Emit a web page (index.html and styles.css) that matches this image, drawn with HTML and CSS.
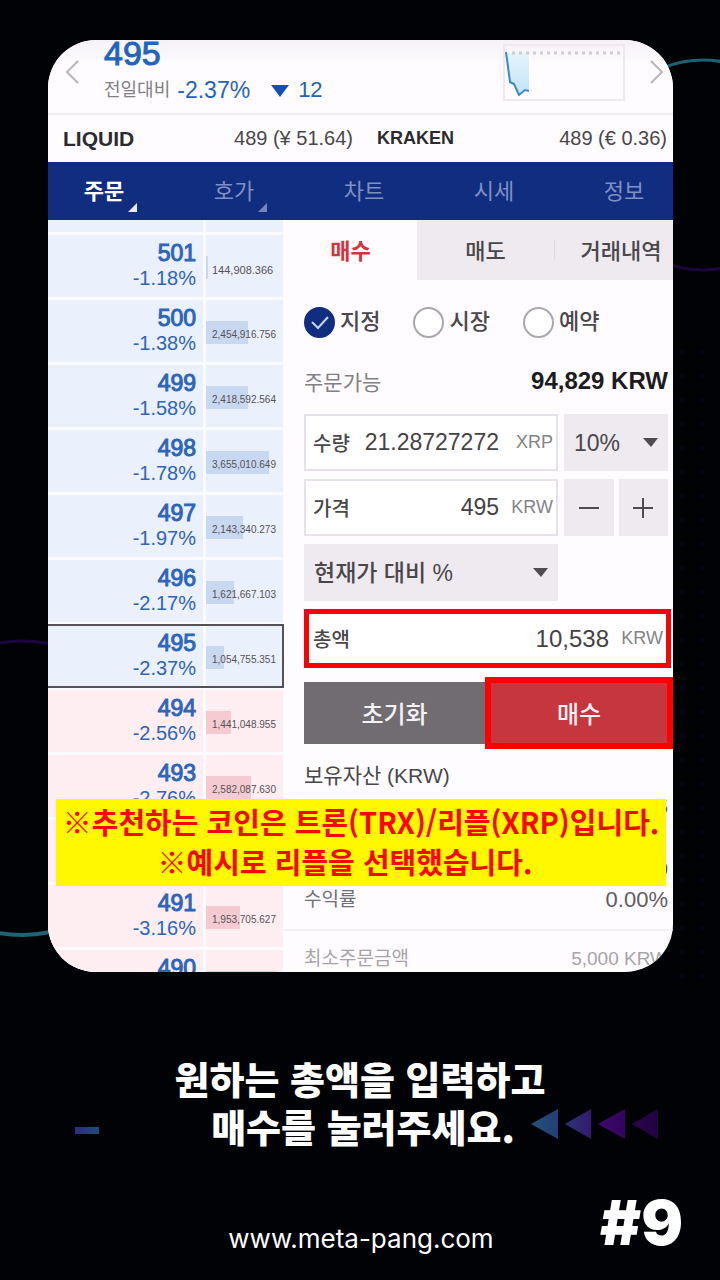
FILE: index.html
```html
<!DOCTYPE html>
<html lang="ko">
<head>
<meta charset="utf-8">
<meta name="viewport" content="width=device-width, initial-scale=1">
<title>#9 매수하기</title>
<link rel="stylesheet" href="styles.css">
</head>
<body>
<div class="page">
  <svg class="ring ring-right" viewBox="0 0 214 214" fill="none" stroke-width="3" aria-hidden="true">
    <path d="M2 107a105 105 0 0 1 210 0" stroke="#1c6473"/>
    <path d="M2 107a105 105 0 0 0 210 0" stroke="#1d0640"/>
  </svg>
  <svg class="ring ring-left" viewBox="0 0 298 298" fill="none" aria-hidden="true">
    <path d="M2 149a147 147 0 0 1 294 0" stroke="#1d0640" stroke-width="3"/>
    <path d="M2 149a147 147 0 0 0 294 0" stroke="#1c6473" stroke-width="4"/>
  </svg>
  <div class="dots"></div>

  <main class="card">
    <header class="ticker">
      <button class="arrow" aria-label="이전"><svg width="14" height="24" viewBox="0 0 14 24" fill="none" stroke="#b9b6ba" stroke-width="2"><path d="M13 1 2 12l11 11"/></svg></button>
      <div class="quote">
        <strong class="quote-price">495</strong>
        <p class="quote-change"><span class="quote-label">전일대비</span><span>-2.37%</span><svg width="18" height="12" viewBox="0 0 18 12" fill="#1450b4"><path d="M0 0h18L9 12z"/></svg><span class="quote-diff">12</span></p>
      </div>
      <svg class="spark" width="122" height="57" viewBox="0 0 122 57" fill="none">
        <defs><linearGradient id="fade" x1="0" y1="0" x2="0" y2="1"><stop offset="0" stop-color="#e4f4fb"/><stop offset="1" stop-color="#c0e4f7"/></linearGradient></defs>
        <rect x="1" y="1" width="120" height="55" stroke="#f0e8ee" stroke-width="2"/>
        <path d="M3 9h23v38l-5-1-5 5-5-10-4-3z" fill="url(#fade)"/>
        <path d="M9 9h109" stroke="#cfcbd0" stroke-width="3" stroke-dasharray="3 4"/>
        <path d="M3 8l4 30 4 2 5 11 6-5 4 1" stroke="#3f88bd" stroke-width="2"/>
      </svg>
      <button class="arrow" aria-label="다음"><svg width="14" height="24" viewBox="0 0 14 24" fill="none" stroke="#b9b6ba" stroke-width="2"><path d="m1 1 11 11L1 23"/></svg></button>
    </header>

    <div class="exchanges">
      <div class="exchange"><b>LIQUID</b><span>489 (¥ 51.64)</span></div>
      <div class="exchange"><b class="small">KRAKEN</b><span>489 (€ 0.36)</span></div>
    </div>

    <nav class="tabs">
      <a class="tab active" href="#">주문<svg class="corner" width="9" height="9" viewBox="0 0 9 9" fill="currentColor"><path d="M9 0v9H0z"/></svg></a>
      <a class="tab" href="#">호가<svg class="corner" width="9" height="9" viewBox="0 0 9 9" fill="currentColor"><path d="M9 0v9H0z"/></svg></a>
      <a class="tab" href="#">차트</a>
      <a class="tab" href="#">시세</a>
      <a class="tab" href="#">정보</a>
    </nav>

    <div class="trade">
      <div class="book">
        <div class="row"><div class="price"><b>502</b><span>-0.98%</span></div><div class="depth"></div></div>
        <div class="row"><div class="price"><b>501</b><span>-1.18%</span></div><div class="depth"><i class="bar" style="width:2%"></i><span class="qty wide">144,908.366</span></div></div>
        <div class="row"><div class="price"><b>500</b><span>-1.38%</span></div><div class="depth"><i class="bar" style="width:55%"></i><span class="qty">2,454,916.756</span></div></div>
        <div class="row"><div class="price"><b>499</b><span>-1.58%</span></div><div class="depth"><i class="bar" style="width:54%"></i><span class="qty">2,418,592.564</span></div></div>
        <div class="row"><div class="price"><b>498</b><span>-1.78%</span></div><div class="depth"><i class="bar" style="width:82%"></i><span class="qty">3,655,010.649</span></div></div>
        <div class="row"><div class="price"><b>497</b><span>-1.97%</span></div><div class="depth"><i class="bar" style="width:48%"></i><span class="qty">2,143,340.273</span></div></div>
        <div class="row"><div class="price"><b>496</b><span>-2.17%</span></div><div class="depth"><i class="bar" style="width:36%"></i><span class="qty">1,621,667.103</span></div></div>
        <div class="row current"><div class="price"><b>495</b><span>-2.37%</span></div><div class="depth"><i class="bar" style="width:23%"></i><span class="qty">1,054,755.351</span></div></div>
        <div class="row bid"><div class="price"><b>494</b><span>-2.56%</span></div><div class="depth"><i class="bar" style="width:32%"></i><span class="qty">1,441,048.955</span></div></div>
        <div class="row bid"><div class="price"><b>493</b><span>-2.76%</span></div><div class="depth"><i class="bar" style="width:58%"></i><span class="qty">2,582,087.630</span></div></div>
        <div class="row bid"><div class="price"></div><div class="depth"></div></div>
        <div class="row bid"><div class="price"><b>491</b><span>-3.16%</span></div><div class="depth"><i class="bar" style="width:44%"></i><span class="qty">1,953,705.627</span></div></div>
        <div class="row bid"><div class="price"><b>490</b></div><div class="depth"><i class="bar" style="width:92%"></i></div></div>
      </div>

      <section class="order">
        <div class="sides">
          <button class="side on">매수</button>
          <button class="side">매도</button>
          <button class="side">거래내역</button>
        </div>
        <form class="form">
          <div class="types">
            <label class="type"><input type="radio" name="type" checked>지정</label>
            <label class="type"><input type="radio" name="type">시장</label>
            <label class="type"><input type="radio" name="type">예약</label>
          </div>
          <p class="available"><span>주문가능</span><b>94,829 KRW</b></p>
          <div class="line">
            <label class="field"><span class="name">수량</span><input type="text" value="21.28727272"><span class="unit">XRP</span></label>
            <div class="pick pick-small"><select aria-label="비율"><option>10%</option></select><svg width="15" height="9" viewBox="0 0 15 9" fill="#4f4c50"><path d="M0 0h15L8 9z"/></svg></div>
          </div>
          <div class="line">
            <label class="field"><span class="name">가격</span><input type="text" value="495"><span class="unit">KRW</span></label>
            <div class="steps">
              <button type="button" class="step" aria-label="감소"><svg width="22" height="22" viewBox="0 0 22 22" stroke="#4f4c50" stroke-width="2"><path d="M1 11h20"/></svg></button>
              <button type="button" class="step" aria-label="증가"><svg width="22" height="22" viewBox="0 0 22 22" stroke="#4f4c50" stroke-width="2"><path d="M1 11h20M11 1v20"/></svg></button>
            </div>
          </div>
          <div class="line">
            <div class="pick pick-wide"><select aria-label="현재가 대비"><option>현재가 대비 %</option></select><svg width="15" height="9" viewBox="0 0 15 9" fill="#4f4c50"><path d="M0 0h15L8 9z"/></svg></div>
          </div>
          <label class="field total"><span class="name">총액</span><input type="text" value="10,538"><span class="unit">KRW</span></label>
          <div class="actions">
            <button type="reset" class="reset">초기화</button>
            <button type="button" class="buy">매수</button>
          </div>
        </form>
        <div class="assets">
          <p>보유자산 (KRW)</p>
          <p class="value">5</p>
          <p class="value"></p>
          <p class="value">0</p>
          <p class="profit"><span>수익률</span><span class="rate">0.00%</span></p>
        </div>
        <p class="minimum"><span>최소주문금액</span><span>5,000 KRW</span></p>
      </section>
    </div>

    <div class="note">
      <p>※추천하는 코인은 트론(TRX)/리플(XRP)입니다.</p>
      <p class="note-second">※예시로 리플을 선택했습니다.</p>
    </div>
  </main>

  <div class="caption">
    <p>원하는 총액을 입력하고</p>
    <div class="caption-row">
      <span class="dash"></span>
      <p>매수를 눌러주세요.</p>
      <svg class="chevrons" width="128" height="30" viewBox="0 0 128 30" aria-hidden="true">
        <defs>
          <linearGradient id="c1"><stop offset="0" stop-color="#1e5579"/><stop offset="1" stop-color="#263d78"/></linearGradient>
          <linearGradient id="c2"><stop offset="0" stop-color="#293674"/><stop offset="1" stop-color="#351a70"/></linearGradient>
          <linearGradient id="c3"><stop offset="0" stop-color="#3b0b70"/><stop offset="1" stop-color="#35045f"/></linearGradient>
          <linearGradient id="c4"><stop offset="0" stop-color="#2c054f"/><stop offset="1" stop-color="#210341"/></linearGradient>
        </defs>
        <path d="M0 15 27 0v30z" fill="url(#c1)"/>
        <path d="M34 15 60 0v30z" fill="url(#c2)"/>
        <path d="M67 15 94 0v30z" fill="url(#c3)"/>
        <path d="M101 15 127 0v30z" fill="url(#c4)"/>
      </svg>
    </div>
  </div>

  <footer class="footer">
    <a class="site" href="#">www.meta-pang.com</a>
    <span class="number">#9</span>
  </footer>
</div>
</body>
</html>
```

FILE: styles.css
```css
* { box-sizing: border-box; }
body {
  margin: 0;
  background: #010206;
  color: #fff;
  font-family: "Liberation Sans", "Noto Sans CJK KR", sans-serif;
}
p { margin: 0; }
button, input, select { font: inherit; color: inherit; border: 0; padding: 0; margin: 0; background: none; border-radius: 0; }
a { color: inherit; text-decoration: none; }

.page { position: relative; min-height: 100vh; padding-top: 40px; overflow: hidden; }
.ring { position: absolute; }
.ring-right { width: 214px; top: 58px; right: -90px; }
.ring-left { width: 298px; top: 639px; left: -127px; }
.dots {
  position: absolute; top: 340px; right: 8px; width: 40px; height: 640px;
  background: radial-gradient(circle, #05042c 1px, transparent 2px) 0 0 / 20px 24px;
}

.card {
  position: relative; display: flex; flex-direction: column;
  margin: 0 47px 0 48px; border-radius: 48px; overflow: hidden;
  background: #fefcff; color: #4a474b;
}

.ticker {
  display: flex; align-items: flex-start; height: 75px; padding: 0 9px 0 17px;
  border-bottom: 2px solid #f1eef3;
  background: linear-gradient(#f5f1f7, #fefcff 24px);
}
.arrow { width: 14px; height: 24px; margin-top: 20px; }
.arrow svg, .spark { display: block; }
.quote { flex: 1; margin-left: 25px; color: #1f65bd; }
.quote-price { display: block; height: 30px; font-size: 34px; line-height: 26px; font-weight: 400; -webkit-text-stroke: 1px; }
.quote-change { display: flex; align-items: center; font-size: 23px; line-height: 40px; }
.quote-label { margin-right: 7px; color: #828084; font-size: 18px; }
.quote-change svg { margin: 2px 9px 0 21px; }
.quote-diff { font-size: 22px; }
.spark { margin: 4px 25px 0 0; }

.exchanges { display: flex; gap: 24px; padding: 0 6px 0 15px; font-size: 20px; line-height: 47px; }
.exchange { flex: 1; display: flex; justify-content: space-between; }
.exchange b { font-size: 21px; color: #2d2a2e; }
.exchange .small { font-size: 18px; }

.tabs { display: grid; grid-template-columns: repeat(5, 1fr); margin: 0 -16px 0 -9px; background: #102d80; }
.tab { position: relative; height: 58px; color: #7f90c2; font-size: 22px; line-height: 60px; text-align: center; }
.tab.active { color: #fff; font-weight: 700; }
.corner { position: absolute; left: calc(50% + 24px); bottom: 8px; opacity: 0.9; }

.trade { display: flex; height: 752px; overflow: hidden; }
.book { display: flex; flex-direction: column; gap: 3px; width: 236px; margin-top: -50px; background: #fbfaff; }
.row { position: relative; flex: none; display: grid; grid-template-columns: 155px 77px; gap: 3px; height: 62px; color: #2d65b7; }
.price, .depth { background: #ebf0fd; }
.price { display: flex; flex-direction: column; align-items: flex-end; padding: 5px 7px 0 0; }
.price b { font-size: 23px; line-height: 26px; font-weight: 400; -webkit-text-stroke: 1px; }
.price span { font-size: 20px; line-height: 25px; -webkit-text-stroke: 0; }
.depth { position: relative; padding-top: 21px; }
.bar { display: block; height: 23px; background: #c8d8f1; }
.qty { position: absolute; left: 6px; top: 27px; font-size: 10px; line-height: 16px; color: #555257; }
.qty.wide { font-size: 11px; }
.bid .price, .bid .depth { background: #feedf1; }
.bid .bar { background: #f5cbd1; }
.current::after { content: ""; position: absolute; inset: -1px 0; border: 2px solid #555257; border-left: 0; }

.order { flex: 1; min-width: 0; }
.sides { display: grid; grid-template-columns: 133px 137px 1fr; height: 60px; font-size: 22px; font-weight: 500; }
.side { height: 60px; padding-bottom: 2px; background: #eeeaf0; white-space: nowrap; }
.side:last-child { padding-left: 15px; background: linear-gradient(#dedbe0, #dedbe0) 0 20px / 1px 20px no-repeat #eeeaf0; }
.side.on { background: none; color: #d3343e; font-weight: 700; }

.form { display: flex; flex-direction: column; gap: 8px; padding: 0 5px 0 20px; }
.types { display: flex; gap: 33px; height: 84px; margin-bottom: -8px; font-size: 22px; font-weight: 500; line-height: 30px; }
.type { display: flex; align-items: center; gap: 5px; }
.type input {
  appearance: none; width: 31px; height: 31px; border: 2px solid #aaa7ac; border-radius: 50%; background: #fff;
}
.type input:checked {
  border-color: #102d80;
  background: url("data:image/svg+xml,%3Csvg xmlns='http://www.w3.org/2000/svg' viewBox='0 0 27 27' fill='none' stroke='%23c9d3f2' stroke-width='2'%3E%3Cpath d='M6 13l6 6 10-11'/%3E%3C/svg%3E") #102d80;
}
.available { display: flex; align-items: center; justify-content: space-between; height: 34px; margin-bottom: 8px; font-size: 21px; color: #838085; }
.available b { font-size: 24px; color: #1d1b1e; }

.line { display: flex; gap: 6px; height: 57px; }
.field { display: flex; align-items: center; flex: 1; min-width: 0; border: 2px solid #e7e2e9; padding: 0 3px 0 7px; background: #fff; }
.line .field, .pick-wide { flex: none; width: 254px; }
.field input { flex: 1; min-width: 0; text-align: right; font-size: 23px; color: #454246; }
.name { font-size: 20px; font-weight: 500; }
.unit { width: 54px; text-align: right; font-size: 18px; color: #858287; }
.pick { display: grid; align-items: center; background: #eeeaf0; }
.pick-small { flex: 1; }
.pick select, .pick svg { grid-area: 1 / 1; }
.pick select { appearance: none; width: 100%; height: 100%; padding-left: 10px; font-size: 23px; font-weight: 500; }
.pick svg { justify-self: end; margin-right: 10px; pointer-events: none; }
.steps { flex: 1; display: grid; grid-template-columns: 1fr 1fr; gap: 5px; }
.step { display: flex; align-items: center; justify-content: center; background: #eeeaf0; }

.total { flex: none; height: 59px; margin-right: -3px; border: 5px solid #fe0000; padding: 0 3px 0 4px; }
.total input { font-size: 24px; }
.actions { display: flex; align-items: center; height: 72px; margin: 1px -5px 0 0; font-size: 24px; font-weight: 500; color: #f6f1f4; }
.reset { flex: 1; height: 62px; padding-bottom: 2px; background: #716c71; }
.buy { width: 188px; height: 72px; padding-bottom: 2px; border: 6px solid #fe0000; background: #c5363f; }

.assets { padding: 11px 5px 14px 20px; border-bottom: 2px solid #f3f0f4; font-size: 21px; line-height: 31px; }
.assets p { min-height: 31px; }
.value { text-align: right; }
.profit { display: flex; justify-content: space-between; font-size: 19px; color: #716e73; }
.rate { font-size: 22px; color: #5f5c61; }
.minimum { display: flex; justify-content: space-between; padding: 13px 5px 0 20px; font-size: 19px; line-height: 30px; color: #a7a3a9; }

.note {
  position: absolute; left: 8px; right: 7px; top: 759px; padding: 2px 0 5px;
  background: #fff800; color: #fa0505; text-align: center; white-space: nowrap;
  font-family: "Noto Sans CJK KR", sans-serif; font-size: 29px; font-weight: 700; line-height: 40px;
}
.note-second { padding-right: 32px; }

.caption { margin-top: 82px; font-family: "Noto Sans CJK KR", sans-serif; font-size: 38px; font-weight: 900; line-height: 48px; text-align: center; }
.caption-row { display: grid; grid-template-columns: 1fr auto 1fr; align-items: center; padding: 0 61px 0 67px; }
.dash { width: 24px; height: 7px; margin: 8px 0 0 8px; background: linear-gradient(90deg, #34349a, #1f5a8a); opacity: 0.85; }
.chevrons { justify-self: end; margin-top: -4px; }

.footer { display: grid; grid-template-columns: 1fr auto 1fr; align-items: end; margin-top: 48px; padding: 0 37px 28px 39px; font-family: Inter, sans-serif; }
.site { grid-column: 2; font-size: 26px; line-height: 30px; }
.number { justify-self: end; font-size: 62px; font-weight: 900; line-height: 50px; margin-bottom: 6px; }
```
